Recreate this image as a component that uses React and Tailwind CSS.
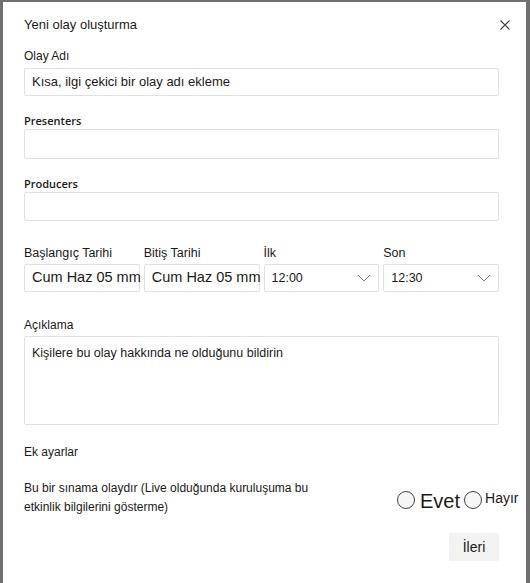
import React, { useState } from 'react';

const sans = "font-['Liberation_Sans',Arial,sans-serif]";

const Chevron = () => (
  <svg width="14" height="8" viewBox="0 0 14 8" fill="none" stroke="#8a8a8a" strokeWidth="1">
    <path d="M1 1l6 6 6-6" />
  </svg>
);

const Radio = ({ checked, onClick }) => (
  <span
    onClick={onClick}
    className="inline-block w-[18px] h-[18px] rounded-full border border-[#444] bg-[#f5f5f5] cursor-pointer shrink-0"
  >
    {checked && <span className="block m-[4px] w-[8px] h-[8px] rounded-full bg-[#333]" />}
  </span>
);

const App = () => {
  const [test, setTest] = useState(null);

  return (
    <div className={`w-[530px] h-[583px] bg-[#6f6f6f] pt-[2px] pl-[3px] ${sans}`}>
      <div className="w-[523px] h-[581px] bg-white text-[#1b1a19] pl-[21px] pr-[27px] pt-[13px]">
        <div className="flex items-center justify-between h-[20px]">
          <h2 className="text-[13px]">Yeni olay oluşturma</h2>
          <button className="w-[12px] h-[12px] mr-[-12px] flex items-center justify-center">
            <svg width="10" height="10" viewBox="0 0 10 10" stroke="#444" strokeWidth="1.1">
              <path d="M0.5 0.5l9 9M9.5 0.5l-9 9" />
            </svg>
          </button>
        </div>

        <label className="block text-[12px] mt-[13px] leading-[16px]">Olay Adı</label>
        <div className="mt-[4px] h-[28px] border border-[#e1e1e1] rounded-[2px] flex items-center px-[7px] text-[13px]">
          Kısa, ilgi çekici bir olay adı ekleme
        </div>

        <label className="block text-[11px] font-semibold font-['Open_Sans',sans-serif] mt-[17px] leading-[16px]">Presenters</label>
        <div className="h-[30px] border border-[#e1e1e1] rounded-[2px]" />

        <label className="block text-[11px] font-semibold font-['Open_Sans',sans-serif] mt-[17px] leading-[16px]">Producers</label>
        <div className="h-[29px] border border-[#e1e1e1] rounded-[2px]" />

        <div className="grid grid-cols-4 gap-[4px] mt-[24px]">
          {[
            ['Başlangıç Tarihi', 'Cum Haz 05 mm', 'date'],
            ['Bitiş Tarihi', 'Cum Haz 05 mm', 'date'],
            ['İlk', '12:00', 'time'],
            ['Son', '12:30', 'time'],
          ].map(([label, value, kind]) => (
            <div key={label} className="min-w-0">
              <div className="text-[12.5px] leading-[16px] whitespace-nowrap">{label}</div>
              <div className="mt-[3px] h-[28px] border border-[#e1e1e1] rounded-[2px] flex items-center">
                {kind === 'date' ? (
                  <span className="pl-[7px] text-[14.5px] whitespace-nowrap">{value}</span>
                ) : (
                  <div className="flex items-center justify-between w-full pl-[7px] pr-[7px]">
                    <span className="text-[12.5px]">{value}</span>
                    <Chevron />
                  </div>
                )}
              </div>
            </div>
          ))}
        </div>

        <label className="block text-[12px] mt-[25px] leading-[16px]">Açıklama</label>
        <div className="mt-[3px] h-[89px] border border-[#e1e1e1] rounded-[2px] px-[7px] pt-[7px] text-[12.5px]">
          Kişilere bu olay hakkında ne olduğunu bildirin
        </div>

        <div className="text-[12px] mt-[19px] leading-[16px]">Ek ayarlar</div>

        <div className="flex items-start mt-[19px]">
          <p className="text-[12px] leading-[19px] w-[300px] shrink-0">
            Bu bir sınama olaydır (Live olduğunda kuruluşuma bu etkinlik bilgilerini gösterme)
          </p>
          <div className="flex items-start mt-[12px] ml-[73px] shrink-0 whitespace-nowrap">
            <Radio checked={test === 'yes'} onClick={() => setTest('yes')} />
            <span className="text-[20px] leading-[22px] ml-[5px] -mt-[1px]">Evet</span>
            <span className="ml-[4px]"><Radio checked={test === 'no'} onClick={() => setTest('no')} /></span>
            <span className="text-[14px] leading-[16px] ml-[3px] -mt-[1px]">Hayır</span>
          </div>
        </div>

        <div className="flex justify-end mt-[16px]">
          <button className="w-[50px] h-[28px] bg-[#f3f3f3] text-[14px] rounded-[2px]">İleri</button>
        </div>
      </div>
    </div>
  );
};

export default App;
